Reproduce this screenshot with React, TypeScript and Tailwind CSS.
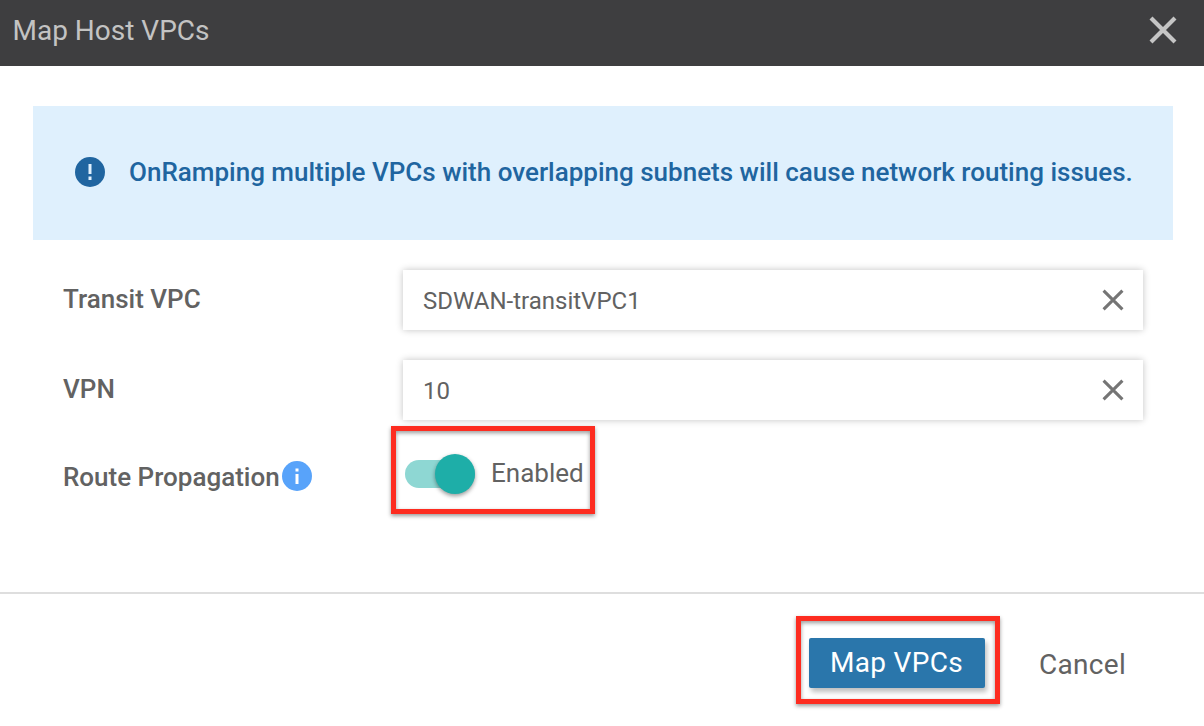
import React from "react";

function Cross({ className }: { className: string }) {
  return (
    <svg viewBox="0 0 28 28" className={className} fill="none" stroke="currentColor">
      <path d="M2 2 26 26M26 2 2 26" />
    </svg>
  );
}

function Field({ label, value }: { label: string; value: string }) {
  return (
    <div className="flex h-[60px] items-center">
      <label className="w-[340px] pb-[2px] text-[26px] font-medium text-[#626262]">{label}</label>
      <div className="flex h-[60px] w-[740px] items-center justify-between bg-white pr-[19px] pl-5 shadow-[0_0_7px_rgba(0,0,0,0.24)]">
        <span className="pt-[2px] text-[24px] text-[#626262]">{value}</span>
        <Cross className="size-[22px] stroke-[3.9] text-[#757575]" />
      </div>
    </div>
  );
}

export default function App() {
  return (
    <div className="flex h-[726px] w-[1204px] flex-col overflow-hidden bg-white font-['Roboto',sans-serif] whitespace-nowrap">
      <header className="flex h-[66px] items-center justify-between bg-[#3e3e40] pr-[27px] pb-[6px] pl-[12.5px]">
        <h1 className="pt-[2px] text-[28px] text-[#c3c3c3]">Map Host VPCs</h1>
        <Cross className="size-7 stroke-[4.2] text-[#c5c5c5]" />
      </header>
      <main className="flex h-[528px] flex-col border-b-2 border-[#dedede] pt-10">
        <div className="mr-[31px] ml-[33px] flex h-[134px] items-center bg-[#dff0fd] pb-[2px] pl-[42px]">
          <svg viewBox="0 0 30 30" className="size-[30px]">
            <circle cx="15" cy="15" r="15" fill="#2065a0" />
            <path d="M15 7v10M15 19.5v3.5" stroke="#dff0fd" strokeWidth="3" />
          </svg>
          <p className="ml-6 text-[26px] font-medium text-[#2065a0]">OnRamping multiple VPCs with overlapping subnets will cause network routing issues.</p>
        </div>
        <div className="mt-[30px] ml-[63px] flex flex-col gap-[30px]">
          <Field label="Transit VPC" value="SDWAN-transitVPC1" />
          <Field label="VPN" value="10" />
        </div>
        <div className="mt-[6px] ml-[63px] flex h-[88px] items-center">
          <div className="flex w-[328px] items-center pt-[14px]">
            <span className="text-[26px] font-medium text-[#626262]">Route Propagation</span>
            <svg viewBox="0 0 30 30" className="mb-[2px] ml-[2px] size-[30px]">
              <circle cx="15" cy="15" r="15" fill="#58a3fa" />
              <path d="M15 7.5v3M15 13v10" stroke="white" strokeWidth="3" />
            </svg>
          </div>
          <div className="flex h-[88px] w-[204px] items-center border-5 border-[#fd2c20] pt-2 pl-[9px] shadow-[0_2px_4px_rgba(0,0,0,0.4),inset_0_2px_4px_rgba(0,0,0,0.4)]">
            <div className="flex h-7 w-[70px] items-center justify-end rounded-full bg-[#8ed7d3]">
              <div className="size-10 rounded-full bg-[#1eaea8] shadow-[0_2px_4px_rgba(0,0,0,0.4)]" />
            </div>
            <span className="ml-4 pb-px text-[26px] text-[#626262]">Enabled</span>
          </div>
        </div>
      </main>
      <footer className="flex h-[132px] items-start pt-[22px] pl-[796px]">
        <div className="flex h-[88px] w-[204px] border-5 border-[#fd2c20] pt-[17px] pl-2 shadow-[0_2px_4px_rgba(0,0,0,0.4),inset_0_2px_4px_rgba(0,0,0,0.4)]">
          <button className="h-[50px] w-[176px] rounded-[2px] bg-[#2a76ab] pr-px pb-px text-[28px] tracking-[0.3px] text-white shadow-[2px_4px_5px_rgba(0,0,0,0.25)]">Map VPCs</button>
        </div>
        <button className="mt-7 ml-[39px] text-[28px] tracking-[0.3px] text-[#626262]">Cancel</button>
      </footer>
    </div>
  );
}
